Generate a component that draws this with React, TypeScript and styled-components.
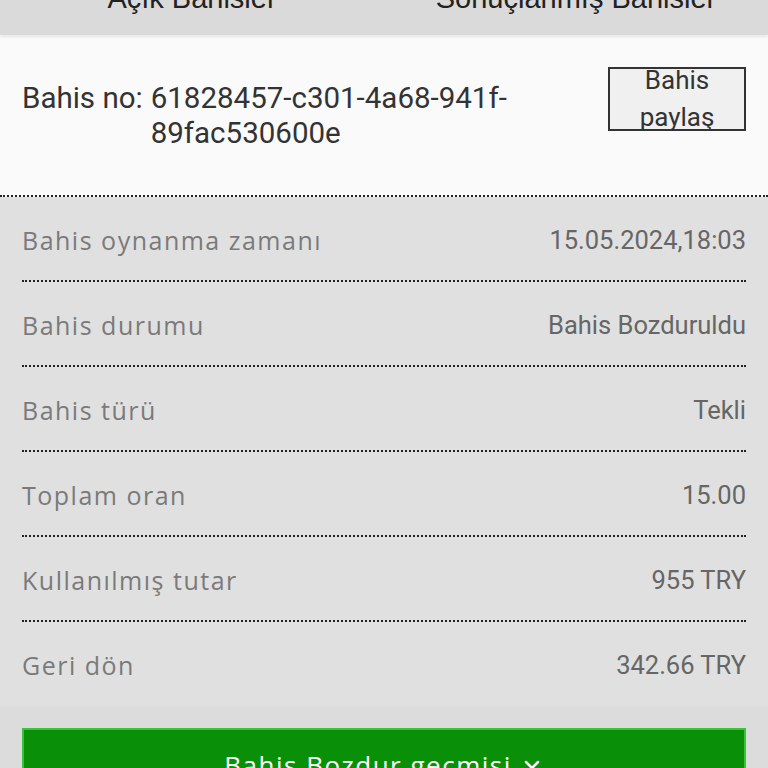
import * as React from 'react';
import styled, { createGlobalStyle } from 'styled-components';
import { ChevronDown } from 'lucide-react';

const rows = [
  { label: 'Bahis oynanma zamanı', value: '15.05.2024,18:03' },
  { label: 'Bahis durumu', value: 'Bahis Bozduruldu' },
  { label: 'Bahis türü', value: 'Tekli' },
  { label: 'Toplam oran', value: '15.00' },
  { label: 'Kullanılmış tutar', value: '955 TRY' },
  { label: 'Geri dön', value: '342.66 TRY' },
];

function App() {
  return (
    <>
      <GlobalStyle />
      <Page>
        <Tabs>
          <Tab>Açık Bahisler</Tab>
          <Tab>Sonuçlanmış Bahisler</Tab>
        </Tabs>
        <Header>
          <BetNo>
            <span>Bahis no:</span>
            <BetId>61828457-c301-4a68-941f-89fac530600e</BetId>
          </BetNo>
          <ShareButton>
            <span>Bahis paylaş</span>
          </ShareButton>
        </Header>
        <Details>
          {rows.map((r, i) => (
            <Row key={r.label} last={i === rows.length - 1}>
              <Label>{r.label}</Label>
              <Value>{r.value}</Value>
            </Row>
          ))}
        </Details>
        <Footer>
          <HistoryButton>
            Bahis Bozdur geçmişi <ChevronDown size={24} strokeWidth={2.5} />
          </HistoryButton>
        </Footer>
      </Page>
    </>
  );
}

const GlobalStyle = createGlobalStyle`
  * { box-sizing: border-box; }
  html, body {
    margin: 0;
    padding: 0;
    background: #dcdcdc;
    overflow: hidden;
  }
`;

const Page = styled.main`
  width: 768px;
  margin-top: -38px;
  display: flex;
  flex-direction: column;
`;

const Tabs = styled.div`
  height: 73px;
  display: grid;
  grid-template-columns: 1fr 1fr;
  align-items: center;
  background: #dadada;
  box-shadow: 0 2px 3px rgba(0, 0, 0, 0.08);
  position: relative;
  z-index: 1;
`;

const Tab = styled.div`
  text-align: center;
  font-family: 'Liberation Sans', Arial, sans-serif;
  font-size: 29px;
  color: #222;
`;

const Header = styled.section`
  height: 162px;
  background: #fafafa;
  display: flex;
  justify-content: space-between;
  align-items: flex-start;
  padding: 32px 22px 0;
  border-bottom: 2px dotted #222;
`;

const BetNo = styled.div`
  display: flex;
  gap: 8px;
  padding-top: 14px;
  font-family: Roboto, sans-serif;
  font-size: 29.5px;
  line-height: 35px;
  color: #333;
`;

const BetId = styled.span`
  width: 375px;
`;

const ShareButton = styled.button`
  width: 138px;
  height: 64px;
  padding: 0 8px;
  overflow: hidden;
  background: #f0f0f0;
  border: 2px solid #333;
  display: flex;
  align-items: center;
  justify-content: center;
  font-family: Roboto, sans-serif;
  font-size: 26px;
  line-height: 37px;
  color: #333;
  text-align: center;

  span {
    width: 90px;
  }
`;

const Details = styled.section`
  background: #e0e0e0;
  padding: 0 22px;
`;

const Row = styled.div<{ last?: boolean }>`
  height: ${(p) => (p.last ? 84 : 85)}px;
  display: flex;
  justify-content: space-between;
  align-items: center;
  border-bottom: ${(p) => (p.last ? 'none' : '2px dotted #222')};
  padding-top: 2px;
`;

const Label = styled.span`
  font-family: 'Open Sans', sans-serif;
  font-size: 25px;
  letter-spacing: 1.5px;
  color: #7a7a7a;
`;

const Value = styled.span`
  font-family: Roboto, sans-serif;
  font-size: 25.5px;
  color: #666;
`;

const Footer = styled.section`
  background: #dcdcdc;
  padding: 22px 22px 0;
`;

const HistoryButton = styled.button`
  width: 100%;
  height: 72px;
  background: #0a8f08;
  border: 2px solid #3cc23a;
  border-bottom: none;
  color: #fff;
  font-family: 'Open Sans', sans-serif;
  font-size: 26px;
  letter-spacing: 1.5px;
  display: flex;
  align-items: center;
  justify-content: center;
  gap: 8px;
`;

export default App;
